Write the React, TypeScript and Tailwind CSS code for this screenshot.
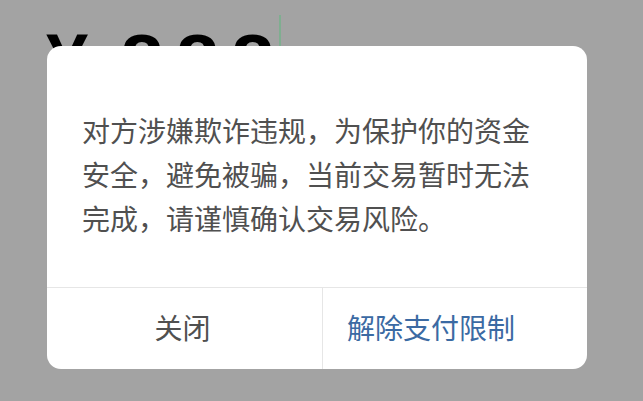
import React from 'react';

const cjk = { fontFamily: '"Noto Sans CJK SC", "Noto Sans", sans-serif' };

export default function App() {
  return (
    <div className="relative h-[401px] w-[643px] overflow-hidden bg-[#a3a3a3]">
      {/* page behind the mask */}
      <div className="flex items-start pl-[46px] pt-[23px]" style={{ fontFamily: '"Liberation Sans", Arial, sans-serif' }}>
        <span className="text-[76px] font-bold leading-none text-black">¥</span>
        <span className="ml-[32px] text-[78px] font-bold leading-none tracking-[12px] text-black">888</span>
        <span className="mt-[-8px] ml-[-7px] h-[31px] w-[2px] bg-[#7fae90]" />
      </div>

      {/* dialog */}
      <div className="absolute left-[47px] top-[46px] flex w-[540px] flex-col overflow-hidden rounded-[14px] bg-white" style={cjk}>
        <div className="h-[241px] px-[35px] pt-[62px] text-[28px] leading-[44px] text-[#505050]">
          对方涉嫌欺诈违规，为保护你的资金安全，避免被骗，当前交易暂时无法完成，请谨慎确认交易风险。
        </div>
        <div className="flex h-[82px] border-t border-[#e6e6e6]">
          <button className="w-[276px] border-r border-[#e6e6e6] pb-[4px] pr-[4px] text-center text-[28px] text-[#505050]">
            关闭
          </button>
          <button className="flex-1 pb-[4px] pl-[24px] text-left text-[28px] text-[#3b6aa3]">
            解除支付限制
          </button>
        </div>
      </div>
    </div>
  );
}
